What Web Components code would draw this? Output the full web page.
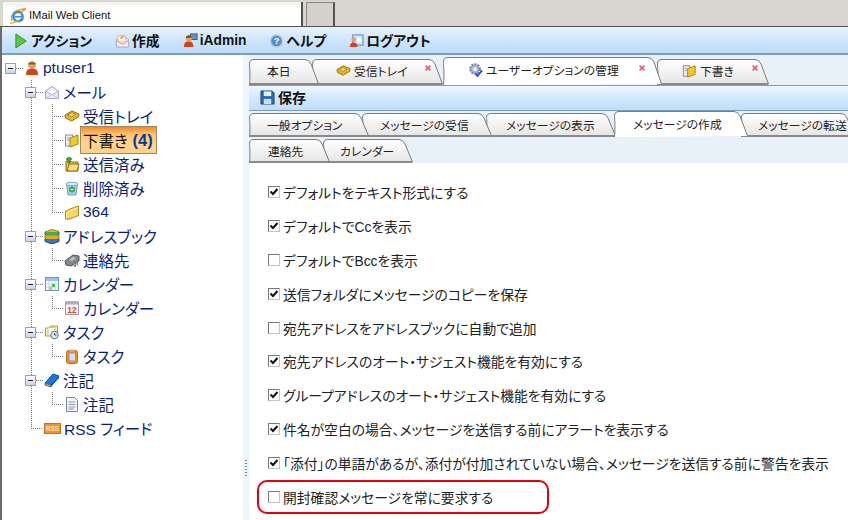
<!DOCTYPE html>
<html lang="ja">
<head>
<meta charset="utf-8">
<title>IMail Web Client</title>
<style>
  html, body { margin: 0; height: 100%; overflow: hidden; background: #fff; }
  body { font-family: "Liberation Sans", "Noto Sans CJK JP", sans-serif; }
</style>
</head>
<body>
<imail-app></imail-app>
<script>
const ICONS = {
  ie: `<path d="M3 13C1 9 4 4 9 3c3-1 6-1 7-2-1 2-3 3-5 4" fill="none" stroke="#e8a020" stroke-width="1.4"/><circle cx="8.5" cy="9" r="5.5" fill="#3a8ee0"/><circle cx="8.5" cy="9" r="3.2" fill="#fff"/><rect x="5" y="8.4" width="7" height="1.5" fill="#3a8ee0"/><path d="M11 11h3l-1 2-3 1z" fill="#3a8ee0"/><path d="M1 15c2 1 5-1 9-3" fill="none" stroke="#e8a020" stroke-width="1.4"/>`,
  play: `<path d="M2 1l11 7.500L2 16z" fill="#58c83e" stroke="#2f8f30"/>`,
  compose: `<path d="M1.500 7L8 2.500 14.500 7v8h-13z" fill="#f3e8ee" stroke="#a9a6c8"/><path d="M3 3h8v6H3z" fill="#fff" stroke="#e7b060"/><path d="M1.500 8L8 12l6.500-4" fill="#f8d8c0" stroke="#a9a6c8"/><path d="M5 5l3-2 2 1-3 3z" fill="#f0a060"/>`,
  admin: `<rect x="8" y="1" width="7" height="6" fill="#6c90c0" stroke="#38588c"/><circle cx="6" cy="6" r="3.200" fill="#e8a068"/><path d="M1 15c0-5 2-6 5-6s5 1 5 6z" fill="#c8441c"/><path d="M3 4l3-2 3 2v1H3z" fill="#803c14"/>`,
  help: `<circle cx="8" cy="8.500" r="6.300" fill="#4f8ed8" stroke="#c0c6d0" stroke-width="1.500"/><text x="8" y="12" font-family="Liberation Sans" font-size="10" font-weight="700" fill="#fff" text-anchor="middle">?</text>`,
  logout: `<rect x="4" y="2" width="11" height="11" fill="#cfe0f2" stroke="#5a86b8"/><rect x="9" y="5" width="4" height="5" fill="#fff"/><circle cx="5" cy="7" r="2.500" fill="#e8a068"/><path d="M1 15c0-4 2-5 4-5s4 1 4 5z" fill="#d8401c"/>`,
  user: `<circle cx="8" cy="5" r="3.800" fill="#e8a068"/><path d="M4 4.500C4 1 12 1 12 4.500z" fill="#a85a20"/><path d="M2 15c0-6 3-6.500 6-6.500S14 9 14 15z" fill="#d04818"/>`,
  mail: `<path d="M1.500 7L8 2.500 14.500 7v7.500h-13z" fill="#eceaf6" stroke="#a5a7c8"/><path d="M1.500 7L8 11l6.500-4" fill="#fff" stroke="#a5a7c8"/><path d="M2 14.500l6-4.500 6 4.500" fill="none" stroke="#c5c7dc"/>`,
  inbox: `<path d="M1 7l7-4 7 3-.5 3-7 4-6-3z" fill="#e4b428" stroke="#9a7414"/><path d="M3.500 7l4-2.300 4 1.800-4 2.300z" fill="#f8e080" stroke="#b08c20"/>`,
  drafts: `<rect x="1.500" y="3" width="7" height="11" fill="#e8ecf4" stroke="#8890a0"/><path d="M6 6l8-3v9l-8 3z" fill="#f0c830" stroke="#a88414"/><path d="M3 6h3M3 8h3" stroke="#9aa0b0"/>`,
  sent: `<path d="M2 5h5l1 1h6v9H2z" fill="#eec43a" stroke="#8c6c14"/><path d="M3 15l2-7h10l-2 7z" fill="#f6de78" stroke="#8c6c14"/><path d="M2 3l3-2 3 2-2 1v3H4V4z" fill="#38a838" stroke="#1c701c" stroke-width=".6"/>`,
  trash: `<path d="M2.500 4h11l-1.500 11H4z" fill="#a6cdee" stroke="#78a0c8"/><ellipse cx="8" cy="4" rx="6" ry="1.800" fill="#dcecf8" stroke="#78a0c8"/><circle cx="8" cy="9.500" r="3" fill="#38a848"/><path d="M6.500 9.500h3" stroke="#fff"/>`,
  folder: `<path d="M1.500 7l3-.5 0-1 10-3.500v9.500l-9 3.500h-4z" fill="#f6d860" stroke="#a8841c"/><path d="M2 14.500l1.500-7 10.500-4" fill="none" stroke="#fff0a8"/>`,
  book: `<path d="M1 4l7-2.500 7 2-7 2.500z" fill="#e8c030" stroke="#9a7c14"/><path d="M1 4v3l7 2.500 7-2.500V4" fill="#50a848" stroke="#2c7028"/><path d="M1 7.500v3l7 2.500 7-2.500v-3" fill="#e8a828" stroke="#9a7c14"/><path d="M1 11v2.500L8 16l7-2.500V11" fill="#3878b8" stroke="#20507c"/>`,
  contact: `<path d="M1 9l8-6 6 1 0 5-8 5-5-1z" fill="#808890" stroke="#50585f"/><path d="M5 8l4-3 3 1-4 3z" fill="#c0c4c8"/><path d="M12 12l2-2v4z" fill="#50a848"/><path d="M9 14l3-2v3z" fill="#e04030"/>`,
  calgrid: `<rect x="1.500" y="1.500" width="13" height="13" fill="#fff" stroke="#6a98cc"/><rect x="2" y="2" width="12" height="3" fill="#9cc0e8"/><path d="M5 5v9M8 5v9M11 5v9M2 8h12M2 11h12" stroke="#c8d4dc"/><rect x="8" y="8" width="3" height="3" fill="#60b048"/><rect x="5" y="11" width="3" height="3" fill="#e8c040"/>`,
  cal: `<rect x="1.500" y="2.500" width="13" height="12" fill="#f8f4fa" stroke="#9898b0"/><rect x="2" y="1" width="12" height="3.500" fill="#b0b0b8"/><text x="8" y="12.500" font-family="Liberation Sans" font-size="8.500" font-weight="700" fill="#e84818" text-anchor="middle">12</text>`,
  taskfolder: `<path d="M1.500 4h4l1-2h7v10h-12z" fill="#fbeeb8" stroke="#c09c20"/><path d="M4 3.500h7v8H4z" fill="#fff" stroke="#c8c0a0"/><circle cx="10.500" cy="11" r="3.800" fill="#d8e4f0" stroke="#607890"/><path d="M10.500 9v2h2" stroke="#405870" fill="none"/>`,
  task: `<rect x="2.500" y="2.500" width="11" height="13" rx="2" fill="#f09020" stroke="#c86c10"/><rect x="5" y="5" width="6.500" height="8" fill="#dcdcf0" stroke="#9090a8"/><rect x="6" y="1.500" width="4" height="2.500" fill="#b0b0c0"/>`,
  notebook: `<path d="M1 11L9 2l6 2-8 9z" fill="#1878e0" stroke="#0c50a0"/><path d="M1 11l6 2 0 2-6-2z" fill="#a0a8b0" stroke="#606870"/><path d="M7 13l8-9v2l-8 9z" fill="#1058b0"/>`,
  note: `<path d="M2.500 1.500h8l3 3v11h-11z" fill="#f4f6f8" stroke="#7888a0"/><path d="M4.500 6h7M4.500 8.500h7M4.500 11h7M4.500 13h5" stroke="#8898a8"/>`,
  rss: `<rect x="0.500" y="3.500" width="16" height="10" fill="#f49030" stroke="#d86c10"/><text x="8.500" y="11" font-family="Liberation Sans" font-size="6.500" font-weight="700" fill="#ffe8c0" text-anchor="middle">RSS</text>`,
  gear: `<circle cx="7.500" cy="7.500" r="5" fill="#b4bcd4" stroke="#7884a8" stroke-width="2.500" stroke-dasharray="2 1.200"/><circle cx="7.500" cy="7.500" r="2" fill="#eef0f8"/><path d="M8 12l2 3 5-6" fill="none" stroke="#2058c0" stroke-width="2"/>`,
  save: `<path d="M1 1h12l2 2v12H1z" fill="#2c68b0" stroke="#1c4c88"/><rect x="4" y="1.500" width="8" height="5" fill="#e8f0f8"/><rect x="4" y="9.500" width="8" height="5.500" fill="#cfdcec"/>`,
  close: `<path d="M2 2l6 6M8 2L2 8" stroke="#f0607c" stroke-width="2.400"/>`
}

class MailIcon extends HTMLElement {
  constructor () {
    super()
    this.shadow = this.attachShadow({ mode: 'open' })
  }

  connectedCallback () {
    const size = this.getAttribute('size') || 16
    const box = this.getAttribute('box') || 16
    this.shadow.innerHTML = /* html */`
      <style>
        :host{ display: inline-flex; flex: none; width: ${size}px; height: ${size}px; }
        svg{ display: block; }
      </style>
      <svg width="${size}" height="${size}" viewBox="0 0 ${box} ${box}">${ICONS[this.getAttribute('name')]}</svg>
    `
  }
}
customElements.define('mail-icon', MailIcon)

class BrowserBar extends HTMLElement {
  constructor () {
    super()
    this.shadow = this.attachShadow({ mode: 'open' })
  }

  connectedCallback () {
    this.shadow.innerHTML = /* html */`
      <style>
        :host{
          display: flex;
          align-items: flex-end;
          height: 27px;
          flex: none;
          box-sizing: border-box;
          background: repeating-conic-gradient(#d5d2cb 0 25%, #dcd9d3 0 50%) 0 0 / 2px 2px;
          border-bottom: 1px solid #55534f;
        }
        .page{
          display: flex;
          align-items: center;
          gap: 3px;
          box-sizing: border-box;
          width: 300px;
          height: 24px;
          margin-left: 3px;
          padding: 2px 0 0 6px;
          background: linear-gradient(#f2f1ee, #fff 30%);
          border-right: 2px solid #55534f;
          font-size: 11.2px;
          color: #111;
        }
        .blank{
          width: 26px;
          height: 23px;
          margin-left: 3px;
          background: #d4d1ca;
          border: 1px solid #8b8983;
          border-width: 1px 2px 0 1px;
          border-right-color: #55534f;
        }
      </style>
      <div class="page"><mail-icon name="ie" size="17"></mail-icon><span>IMail Web Client</span></div>
      <div class="blank"></div>
    `
  }
}
customElements.define('browser-bar', BrowserBar)

class ToolItem extends HTMLElement {
  constructor () {
    super()
    this.shadow = this.attachShadow({ mode: 'open' })
  }

  connectedCallback () {
    this.shadow.innerHTML = /* html */`
      <style>
        :host{
          display: flex;
          align-items: center;
          gap: 2px;
          font-size: 13.8px;
          font-weight: 700;
          color: #111;
          font-feature-settings: "palt";
        }
      </style>
      <mail-icon name="${this.getAttribute('icon')}" size="15"></mail-icon><slot></slot>
    `
  }
}
customElements.define('tool-item', ToolItem)

class MainToolbar extends HTMLElement {
  constructor () {
    super()
    this.shadow = this.attachShadow({ mode: 'open' })
  }

  connectedCallback () {
    this.shadow.innerHTML = /* html */`
      <style>
        :host{
          display: flex;
          align-items: center;
          flex: none;
          box-sizing: border-box;
          height: 28px;
          padding: 0 0 0 12px;
          background: linear-gradient(#e6f2fd, #cbe3fb 60%, #bedbf8);
          border-bottom: 2px solid #7f9db9;
        }
        ::slotted(:nth-child(1)){ margin-right: 23px; }
        ::slotted(:nth-child(2)){ margin-right: 23px; }
        ::slotted(:nth-child(3)){ margin-right: 23px; }
        ::slotted(:nth-child(4)){ margin-right: 23px; }
      </style>
      <slot></slot>
    `
  }
}
customElements.define('main-toolbar', MainToolbar)

class TreeRow extends HTMLElement {
  constructor () {
    super()
    this.shadow = this.attachShadow({ mode: 'open' })
  }

  connectedCallback () {
    const level = Number(this.getAttribute('level') || 0)
    const indent = [3, 23, 62][level]
    const toggle = this.hasAttribute('open')
    const isRss = this.getAttribute('icon') === 'rss'
    const dots = 'repeating-linear-gradient(var(--dir), #777 0 1px, transparent 1px 2px)'
    this.shadow.innerHTML = /* html */`
      <style>
        :host{
          display: block;
          position: relative;
          height: 24px;
          font-size: 15.5px;
          color: #0a1f7a;
          font-feature-settings: "palt";
        }
        .row{
          display: flex;
          align-items: center;
          height: 24px;
          padding-left: ${indent}px;
        }
        .box{
          box-sizing: border-box;
          flex: none;
          width: 11px;
          height: 11px;
          margin-right: 8px;
          background: linear-gradient(#fff, #c4d4e6);
          border: 1px solid #8ba3bd;
          position: relative;
          z-index: 1;
        }
        .box::after{
          content: '';
          position: absolute;
          left: 2px;
          top: 4px;
          width: 5px;
          height: 1px;
          background: #223;
        }
        .stub{ flex: none; width: 19px; }
        .label{ margin-left: 3px; white-space: nowrap; }
        .line{ position: absolute; background-image: ${dots}; }
        .v{ --dir: to bottom; width: 1px; top: 0; }
        .h{ --dir: to right; height: 1px; top: 12px; }
        .v1{ left: 29px; height: ${this.hasAttribute('last') ? 12 : 24}px; }
        .h1{ left: 29px; width: 12px; }
        .v2{ left: 50px; height: ${this.hasAttribute('end') ? 12 : 24}px; }
        .h2{ left: 50px; width: 12px; }
        .h0{ left: 14px; width: 8px; }
        .hs{ left: 34px; width: 8px; }
      </style>
      ${level === 0 ? '<i class="line h h0"></i>' : ''}
      ${level >= 1 ? '<i class="line v v1"></i>' : ''}
      ${level === 1 && toggle ? '<i class="line h hs"></i>' : ''}
      ${level === 1 && !toggle ? '<i class="line h h1"></i>' : ''}
      ${level === 2 ? '<i class="line v v2"></i><i class="line h h2"></i>' : ''}
      <div class="row">
        ${toggle ? '<span class="box"></span>' : ''}
        ${level === 1 && !toggle ? '<span class="stub"></span>' : ''}
        <mail-icon name="${this.getAttribute('icon')}" size="${isRss ? 17 : 16}" box="${isRss ? 17 : 16}"></mail-icon>
        <span class="label"><slot></slot></span>
      </div>
    `
  }
}
customElements.define('tree-row', TreeRow)

class SelectedLabel extends HTMLElement {
  constructor () {
    super()
    this.shadow = this.attachShadow({ mode: 'open' })
  }

  connectedCallback () {
    this.shadow.innerHTML = /* html */`
      <style>
        :host{
          display: inline-flex;
          align-items: center;
          box-sizing: border-box;
          width: 77px;
          height: 28px;
          margin-left: -3px;
          padding: 0 0 0 2px;
          gap: 5px;
          color: #111;
          background: linear-gradient(#f08a24, #ffc272 28%, #ffd596 65%, #ffcf85);
          border: 1px solid #a48a58;
        }
        b{ color: #0a3a94; font-size: 16.5px; }
      </style>
      <slot></slot><b>(4)</b>
    `
  }
}
customElements.define('selected-label', SelectedLabel)

class FolderTree extends HTMLElement {
  constructor () {
    super()
    this.shadow = this.attachShadow({ mode: 'open' })
  }

  connectedCallback () {
    this.shadow.innerHTML = /* html */`
      <style>
        :host{
          display: block;
          flex: none;
          box-sizing: border-box;
          width: 241px;
          padding-top: 1px;
          background: #fff;
        }
      </style>
      <slot></slot>
    `
  }
}
customElements.define('folder-tree', FolderTree)

class FolderTab extends HTMLElement {
  constructor () {
    super()
    this.shadow = this.attachShadow({ mode: 'open' })
  }

  connectedCallback () {
    const w = Number(this.getAttribute('w'))
    const active = this.hasAttribute('active')
    const h = Number(this.getAttribute('h') || 24) + (active ? 2 : 0)
    const closex = this.getAttribute('closex')
    const path = `M0.5 ${h}C1.500 ${h - 10} 0.500 ${h - 20} 0.500 5Q0.500 0.500 5 0.500H${w - 14}Q${w - 10} 0.500 ${w - 8} 5L${w - 0.5} ${h - 1}`
    const fill = active ? '#fff' : `url(#g)`
    this.shadow.innerHTML = /* html */`
      <style>
        :host{
          display: block;
          flex: none;
          position: relative;
          width: ${w}px;
          height: ${h}px;
          margin-left: ${this.getAttribute('overlap') ? -Number(this.getAttribute('overlap')) : 0}px;
          z-index: ${active ? 9 : (this.getAttribute('z') || 1)};
          font-size: 11.8px;
          color: #222;
          font-feature-settings: "palt";
        }
        svg{ position: absolute; left: 0; top: 0; }
        .body{
          position: relative;
          display: flex;
          align-items: center;
          gap: 3px;
          height: ${h - (this.getAttribute('h') ? 4 : 2)}px;
          padding-left: ${this.getAttribute('pad') || 18}px;
          white-space: nowrap;
        }
        .x{ position: absolute; left: ${closex}px; top: ${active ? 7 : 5}px; }
      </style>
      <svg width="${w}" height="${h}">
        <defs><linearGradient id="g" x1="0" y1="0" x2="0" y2="1"><stop offset="0" stop-color="#fff"/><stop offset="1" stop-color="#e4e4e4"/></linearGradient></defs>
        <path d="${path}${active ? '' : 'Z'}" fill="${fill}" stroke="#7b7b7b"/>
        ${active ? '' : `<path d="M1 ${h - 1}H${w - 1}" stroke="#8a8a8a" stroke-width="2"/>`}
      </svg>
      <div class="body">
        ${this.getAttribute('icon') ? `<mail-icon name="${this.getAttribute('icon')}" size="15"></mail-icon>` : ''}
        <span><slot></slot></span>
      </div>
      ${closex ? '<mail-icon class="x" name="close" size="8" box="10"></mail-icon>' : ''}
    `
  }
}
customElements.define('folder-tab', FolderTab)

class TabStrip extends HTMLElement {
  constructor () {
    super()
    this.shadow = this.attachShadow({ mode: 'open' })
  }

  connectedCallback () {
    this.shadow.innerHTML = /* html */`
      <style>
        :host{
          display: flex;
          align-items: flex-end;
          flex: none;
          height: ${this.getAttribute('h') || 26}px;
          overflow: hidden;
        }
      </style>
      <slot></slot>
    `
  }
}
customElements.define('tab-strip', TabStrip)

class SaveBar extends HTMLElement {
  constructor () {
    super()
    this.shadow = this.attachShadow({ mode: 'open' })
  }

  connectedCallback () {
    this.shadow.innerHTML = /* html */`
      <style>
        :host{
          display: flex;
          align-items: center;
          gap: 3px;
          flex: none;
          box-sizing: border-box;
          height: 26px;
          padding: 0 0 2px 11px;
          background: linear-gradient(#eef7ff, #cfe7fd 55%, #bfdefa);
          border-top: 1px solid #7f9db9;
          border-bottom: 1px solid #7f9db9;
          font-size: 14px;
          font-weight: 700;
          color: #111;
          font-feature-settings: "palt";
        }
      </style>
      <mail-icon name="save" size="15"></mail-icon><slot></slot>
    `
  }
}
customElements.define('save-bar', SaveBar)

class OptionRow extends HTMLElement {
  constructor () {
    super()
    this.shadow = this.attachShadow({ mode: 'open' })
  }

  connectedCallback () {
    const checked = this.hasAttribute('checked')
    this.shadow.innerHTML = /* html */`
      <style>
        :host{
          display: flex;
          align-items: center;
          gap: 3px;
          position: relative;
          height: 33.900px;
          font-size: 13.800px;
          color: #222;
          white-space: nowrap;
          font-feature-settings: "palt";
        }
        .check{
          box-sizing: border-box;
          flex: none;
          width: 12px;
          height: 12px;
          background: #fff;
          border: 1px solid #77777a;
          border-right-color: #c4c4c4;
          border-bottom-color: #c4c4c4;
        }
        svg{ display: block; }
        .mark{
          position: absolute;
          left: -11px;
          top: 0;
          width: 292px;
          height: 34px;
          box-sizing: border-box;
          border: 2px solid #e4000f;
          border-radius: 10px;
        }
      </style>
      <span class="check">${checked ? '<svg width="10" height="10"><path d="M1.500 4.500l2.500 2.500L8.500 2" fill="none" stroke="#111" stroke-width="2"/></svg>' : ''}</span>
      <span><slot></slot></span>
      ${this.hasAttribute('marked') ? '<i class="mark"></i>' : ''}
    `
  }
}
customElements.define('option-row', OptionRow)

class OptionsPanel extends HTMLElement {
  constructor () {
    super()
    this.shadow = this.attachShadow({ mode: 'open' })
  }

  connectedCallback () {
    this.shadow.innerHTML = /* html */`
      <style>
        :host{
          display: block;
          flex: 1;
          padding: 12px 0 0 19px;
          background: #fff;
          overflow: hidden;
        }
      </style>
      <slot></slot>
    `
  }
}
customElements.define('options-panel', OptionsPanel)

class WorkArea extends HTMLElement {
  constructor () {
    super()
    this.shadow = this.attachShadow({ mode: 'open' })
  }

  connectedCallback () {
    this.shadow.innerHTML = /* html */`
      <style>
        :host{
          display: flex;
          flex-direction: column;
          flex: 1;
          min-width: 0;
          padding-top: 2px;
          background: repeating-conic-gradient(#e3eefb 0 25%, #ebf3fc 0 50%) 0 0 / 2px 2px;
        }
      </style>
      <slot></slot>
    `
  }
}
customElements.define('work-area', WorkArea)

class SplitBar extends HTMLElement {
  constructor () {
    super()
    this.shadow = this.attachShadow({ mode: 'open' })
  }

  connectedCallback () {
    this.shadow.innerHTML = /* html */`
      <style>
        :host{
          display: flex;
          align-items: flex-end;
          flex: none;
          box-sizing: border-box;
          width: 6px;
          padding: 0 0 44px 2px;
          background: #eef4fb;
        }
        i{
          width: 2px;
          height: 16px;
          background-image: linear-gradient(#5f86b6 50%, transparent 50%);
          background-size: 2px 3px;
        }
      </style>
      <i></i>
    `
  }
}
customElements.define('split-bar', SplitBar)

class ImailApp extends HTMLElement {
  constructor () {
    super()
    this.shadow = this.attachShadow({ mode: 'open' })
  }

  connectedCallback () {
    this.shadow.innerHTML = /* html */`
      <style>
        :host{
          display: flex;
          flex-direction: column;
          width: 848px;
          height: 520px;
          overflow: hidden;
          font-family: "Liberation Sans", "Noto Sans CJK JP", sans-serif;
        }
        .frame{
          flex: 1;
          display: flex;
          flex-direction: column;
          min-height: 0;
          border-left: 2px solid #6b6b6b;
        }
        .panes{ flex: 1; display: flex; min-height: 0; }
      </style>
      <browser-bar></browser-bar>
      <div class="frame">
        <main-toolbar>
          <tool-item icon="play">アクション</tool-item>
          <tool-item icon="compose">作成</tool-item>
          <tool-item icon="admin">iAdmin</tool-item>
          <tool-item icon="help">ヘルプ</tool-item>
          <tool-item icon="logout">ログアウト</tool-item>
        </main-toolbar>
        <div class="panes">
          <folder-tree>
            <tree-row level="0" open icon="user">ptuser1</tree-row>
            <tree-row level="1" open icon="mail">メール</tree-row>
            <tree-row level="2" icon="inbox">受信トレイ</tree-row>
            <tree-row level="2" icon="drafts"><selected-label>下書き</selected-label></tree-row>
            <tree-row level="2" icon="sent">送信済み</tree-row>
            <tree-row level="2" icon="trash">削除済み</tree-row>
            <tree-row level="2" end icon="folder">364</tree-row>
            <tree-row level="1" open icon="book">アドレスブック</tree-row>
            <tree-row level="2" end icon="contact">連絡先</tree-row>
            <tree-row level="1" open icon="calgrid">カレンダー</tree-row>
            <tree-row level="2" end icon="cal">カレンダー</tree-row>
            <tree-row level="1" open icon="taskfolder">タスク</tree-row>
            <tree-row level="2" end icon="task">タスク</tree-row>
            <tree-row level="1" open icon="notebook">注記</tree-row>
            <tree-row level="2" end icon="note">注記</tree-row>
            <tree-row level="1" last icon="rss">RSS フィード</tree-row>
          </folder-tree>
          <split-bar></split-bar>
          <work-area>
            <tab-strip h="28">
              <folder-tab w="70" h="26" z="4">本日</folder-tab>
              <folder-tab w="131" h="26" overlap="7" z="3" pad="24" icon="inbox" closex="112">受信トレイ</folder-tab>
              <folder-tab w="219" h="26" active pad="25" icon="gear" closex="195">ユーザーオプションの管理</folder-tab>
              <folder-tab w="112" h="26" overlap="5" pad="25" icon="drafts" closex="94">下書き</folder-tab>
            </tab-strip>
            <save-bar>保存</save-bar>
            <tab-strip>
              <folder-tab w="120" z="5">一般オプション</folder-tab>
              <folder-tab w="130" overlap="7" z="4">メッセージの受信</folder-tab>
              <folder-tab w="130" overlap="6" z="3" pad="20">メッセージの表示</folder-tab>
              <folder-tab w="134" overlap="2" active pad="19">メッセージの作成</folder-tab>
              <folder-tab w="114" overlap="7" pad="17">メッセージの転送</folder-tab>
            </tab-strip>
            <tab-strip>
              <folder-tab w="81" z="3" pad="19">連絡先</folder-tab>
              <folder-tab w="90" overlap="7" pad="17">カレンダー</folder-tab>
            </tab-strip>
            <options-panel>
              <option-row checked>デフォルトをテキスト形式にする</option-row>
              <option-row checked>デフォルトでCcを表示</option-row>
              <option-row>デフォルトでBccを表示</option-row>
              <option-row checked>送信フォルダにメッセージのコピーを保存</option-row>
              <option-row>宛先アドレスをアドレスブックに自動で追加</option-row>
              <option-row checked>宛先アドレスのオート・サジェスト機能を有効にする</option-row>
              <option-row checked>グループアドレスのオート・サジェスト機能を有効にする</option-row>
              <option-row checked>件名が空白の場合、メッセージを送信する前にアラートを表示する</option-row>
              <option-row checked>「添付」の単語があるが、添付が付加されていない場合、メッセージを送信する前に警告を表示</option-row>
              <option-row marked>開封確認メッセージを常に要求する</option-row>
            </options-panel>
          </work-area>
        </div>
      </div>
    `
  }
}
customElements.define('imail-app', ImailApp)
</script>
</body>
</html>
